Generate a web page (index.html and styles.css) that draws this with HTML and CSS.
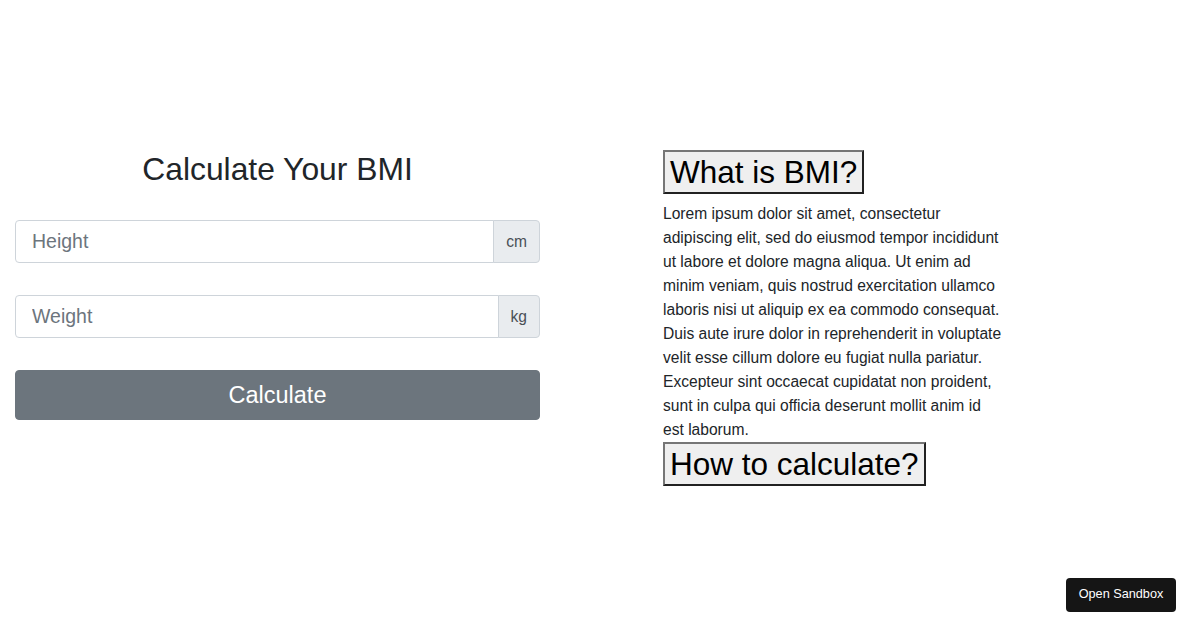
FILE: index.html
```html
<!DOCTYPE html>
<html lang="en">
<head>
<meta charset="utf-8">
<title>BMI Calculator</title>
<link rel="stylesheet" href="styles.css">
</head>
<body>
  <main class="page">
    <section class="calc">
      <h2 class="calc-title">Calculate Your BMI</h2>
      <div class="input-group">
        <input class="form-control" type="text" placeholder="Height">
        <span class="addon">cm</span>
      </div>
      <div class="input-group">
        <input class="form-control" type="text" placeholder="Weight">
        <span class="addon">kg</span>
      </div>
      <button class="btn-calc" type="button">Calculate</button>
    </section>
    <section class="info">
      <h1 class="info-head"><span class="info-btn">What is BMI?</span></h1>
      <p class="info-text">Lorem ipsum dolor sit amet, consectetur adipiscing elit, sed do eiusmod tempor incididunt ut labore et dolore magna aliqua. Ut enim ad minim veniam, quis nostrud exercitation ullamco laboris nisi ut aliquip ex ea commodo consequat. Duis aute irure dolor in reprehenderit in voluptate velit esse cillum dolore eu fugiat nulla pariatur. Excepteur sint occaecat cupidatat non proident, sunt in culpa qui officia deserunt mollit anim id est laborum.</p>
      <h1 class="info-head"><span class="info-btn">How to calculate?</span></h1>
    </section>
  </main>
  <a class="sandbox-btn" href="#">Open Sandbox</a>
</body>
</html>
```
FILE: styles.css
```css
* { box-sizing: border-box; }
html, body { margin: 0; padding: 0; }
body {
  width: 1200px;
  height: 630px;
  background: #fff;
  color: #212529;
  font-family: "Liberation Sans", Arial, sans-serif;
  font-size: 16px;
  line-height: 1.5;
  position: relative;
  overflow: hidden;
}
.page {
  display: flex;
  align-items: flex-start;
  padding-top: 150px;
  padding-left: 15px;
}
.calc {
  width: 525px;
  display: flex;
  flex-direction: column;
}
.calc-title {
  margin: 0 0 32px;
  font-size: 31.8px;
  font-weight: 400;
  line-height: 38px;
  text-align: center;
  color: #212529;
}
.input-group {
  display: flex;
  height: 43px;
  margin-bottom: 32px;
}
.form-control {
  flex: 1;
  min-width: 0;
  height: 43px;
  margin: 0;
  padding: 0 16px;
  border: 1px solid #ced4da;
  border-radius: 4px 0 0 4px;
  font-family: "Liberation Sans", Arial, sans-serif;
  font-size: 19.5px;
  color: #495057;
  background: #fff;
  outline: none;
}
.form-control::placeholder { color: #6c757d; opacity: 1; }
.addon {
  display: flex;
  align-items: center;
  margin-left: -1px;
  padding: 0 12px;
  border: 1px solid #ced4da;
  border-radius: 0 4px 4px 0;
  background: #e9ecef;
  color: #495057;
  font-size: 15.6px;
}
.btn-calc {
  height: 50px;
  margin: 0;
  padding: 0;
  border: 1px solid #6c757d;
  border-radius: 4px;
  background: #6c757d;
  color: #fff;
  font-family: "Liberation Sans", Arial, sans-serif;
  font-size: 23.5px;
  line-height: 36px;
}
.info {
  margin-left: 123px;
  width: 340px;
}
.info-head {
  margin: 0;
  font-size: 16px;
  font-weight: 400;
  line-height: 1;
}
.info-head:first-child { margin-bottom: 8px; }
.info-btn {
  display: inline-block;
  padding: 1px 5px;
  border: 2px outset #767676;
  background: #efefef;
  color: #000;
  font-size: 31.5px;
  line-height: 38px;
}
.info-text {
  margin: 0;
  font-size: 15.6px;
  line-height: 24px;
  color: #212529;
}
.sandbox-btn {
  position: absolute;
  right: 24px;
  bottom: 18px;
  width: 110px;
  height: 34px;
  display: flex;
  align-items: center;
  justify-content: center;
  border-radius: 4px;
  background: #151515;
  color: #fff;
  font-size: 12.7px;
  text-decoration: none;
}
```
